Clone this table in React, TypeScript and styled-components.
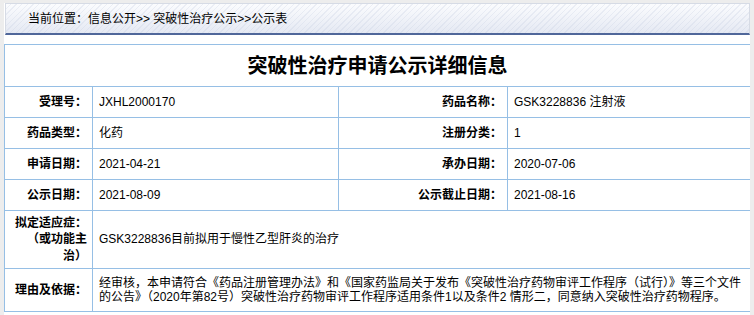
import React from 'react'
import styled, { createGlobalStyle } from 'styled-components'

const GlobalStyle = createGlobalStyle`
    html, body {
        margin: 0;
        padding: 0;
        background: #ededed;
    }
    body {
        font-family: "Liberation Sans", Arial, "Noto Sans CJK SC", sans-serif;
        font-size: 12px;
        color: #000;
    }
`

const Page = styled.div`
    margin: 3px 4px 0 4px;
    background: #fff;
    height: 312px;
    overflow: hidden;
`

const Crumbs = styled.div`
    height: 29px;
    margin-left: 1px;
    border: 1px solid #d6dbe5;
    border-bottom: 2px solid #50679a;
    box-sizing: content-box;
    display: flex;
    align-items: center;
    padding-left: 22px;
    line-height: 16px;
    background:
        repeating-linear-gradient(135deg, rgba(255,255,255,0) 0 3px, rgba(200,208,226,0.3) 3px 4px),
        linear-gradient(#fbfcfe, #e5e9f3);
`

const Table = styled.table`
    margin-top: 9px;
    width: 746px;
    border-collapse: collapse;
    table-layout: fixed;

    td {
        border: 1px solid #96bfe5;
        padding: 0;
    }
`

const Title = styled.td`
    height: 41px;
    text-align: center;
    font-size: 20px;
    font-weight: bold;
    line-height: 24px;
`

type CellProps = {
    $h?: number
}

const Label = styled.td<CellProps>`
    height: ${props => props.$h ?? 30}px;
    text-align: right;
    font-weight: bold;
    padding-left: 9px !important;
    padding-right: 5px !important;
    line-height: 16.5px;
`

const Value = styled.td<CellProps>`
    height: ${props => props.$h ?? 30}px;
    padding-left: 6px !important;
    padding-right: 4px !important;
    line-height: 14.5px;
`

const rows = [
    ['受理号：', 'JXHL2000170', '药品名称：', 'GSK3228836 注射液'],
    ['药品类型：', '化药', '注册分类：', '1'],
    ['申请日期：', '2021-04-21', '承办日期：', '2020-07-06'],
    ['公示日期：', '2021-08-09', '公示截止日期：', '2021-08-16'],
]

const App = () => {
    return (
        <>
            <GlobalStyle />
            <Page>
                <Crumbs>当前位置：信息公开&gt;&gt; 突破性治疗公示&gt;&gt;公示表</Crumbs>
                <Table>
                    <colgroup>
                        <col style={{ width: 88 }} />
                        <col style={{ width: 246 }} />
                        <col style={{ width: 169 }} />
                        <col style={{ width: 243 }} />
                    </colgroup>
                    <tbody>
                        <tr>
                            <Title colSpan={4}>突破性治疗申请公示详细信息</Title>
                        </tr>
                        {rows.map(r => (
                            <tr key={r[0]}>
                                <Label>{r[0]}</Label>
                                <Value>{r[1]}</Value>
                                <Label>{r[2]}</Label>
                                <Value>{r[3]}</Value>
                            </tr>
                        ))}
                        <tr>
                            <Label $h={57}>拟定适应症：（或功能主治）</Label>
                            <Value $h={57} colSpan={3}>GSK3228836目前拟用于慢性乙型肝炎的治疗</Value>
                        </tr>
                        <tr>
                            <Label $h={42}>理由及依据：</Label>
                            <Value $h={42} colSpan={3}>
                                经审核，本申请符合《药品注册管理办法》和《国家药监局关于发布《突破性治疗药物审评工作程序（试行）》等三个文件的公告》（2020年第82号）突破性治疗药物审评工作程序适用条件1以及条件2 情形二，同意纳入突破性治疗药物程序。
                            </Value>
                        </tr>
                    </tbody>
                </Table>
            </Page>
        </>
    )
}

export default App
